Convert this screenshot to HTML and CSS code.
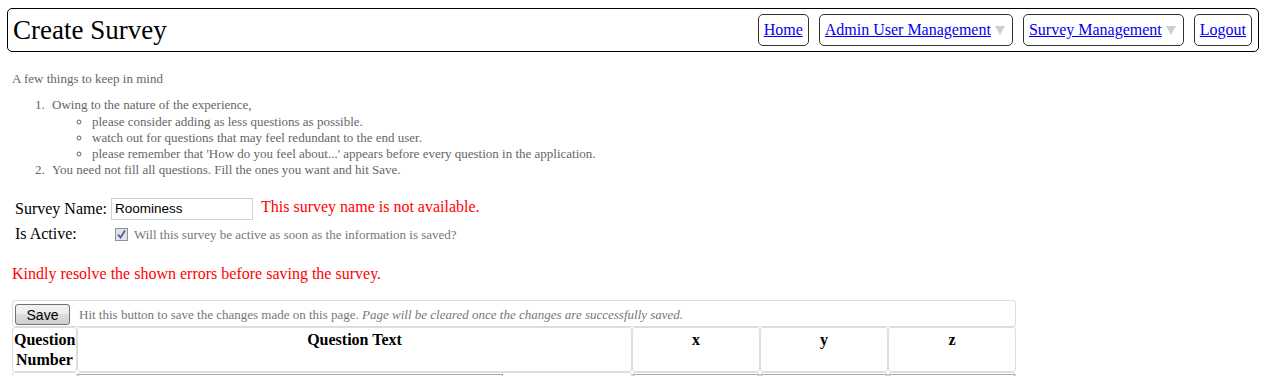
FILE: index.html
```html
<!DOCTYPE html>
<html lang="en">
<head>
    <meta charset="UTF-8">
    <title>Create Survey</title>
    <link rel="stylesheet" href="styles.css">
</head>
<body>
<div class="header">
    <h1 class="title">Create Survey</h1>
    <ul class="nav">
        <li><a href="#">Home</a></li>
        <li><a href="#">Admin User Management</a><span class="caret"></span></li>
        <li><a href="#">Survey Management</a><span class="caret"></span></li>
        <li><a href="#">Logout</a></li>
    </ul>
</div>

<div class="content">
    <div class="notes">
        <p>A few things to keep in mind</p>
        <ol>
            <li>Owing to the nature of the experience,
                <ul>
                    <li>please consider adding as less questions as possible.</li>
                    <li>watch out for questions that may feel redundant to the end user.</li>
                    <li>please remember that 'How do you feel about...' appears before every question in the application.</li>
                </ul>
            </li>
            <li>You need not fill all questions. Fill the ones you want and hit Save.</li>
        </ol>
    </div>

    <table class="fields">
        <tr class="name-row">
            <td class="label">Survey Name:</td>
            <td><input class="name-input" type="text" value="Roominess"> <span class="error">This survey name is not available.</span></td>
        </tr>
        <tr class="active-row">
            <td class="label">Is Active:</td>
            <td>
                <span class="check"><svg width="13" height="13" viewBox="0 0 13 13"><rect x="0.5" y="0.5" width="12" height="12" fill="#e2e3e6" stroke="#8f9094"/><path d="M3 6.5 L5.5 9.5 L10 2.5" fill="none" stroke="#4c5f8f" stroke-width="1.8"/></svg></span><span class="hint">Will this survey be active as soon as the information is saved?</span>
            </td>
        </tr>
    </table>

    <p class="summary">Kindly resolve the shown errors before saving the survey.</p>

    <table class="questions">
        <colgroup>
            <col class="col-num">
            <col class="col-text">
            <col class="col-dim">
            <col class="col-dim">
            <col class="col-dim">
        </colgroup>
        <tr>
            <td class="save-bar" colspan="5">
                <button class="save-btn" type="button">Save</button>
                <span class="save-hint">Hit this button to save the changes made on this page. <em>Page will be cleared once the changes are successfully saved.</em></span>
            </td>
        </tr>
        <tr>
            <th>Question Number</th>
            <th>Question Text</th>
            <th>x</th>
            <th>y</th>
            <th>z</th>
        </tr>
        <tr>
            <td class="num"></td>
            <td><input class="text-input" type="text"></td>
            <td><input class="dim-input" type="text"></td>
            <td><input class="dim-input" type="text"></td>
            <td><input class="dim-input" type="text"></td>
        </tr>
    </table>
</div>
</body>
</html>
```

FILE: styles.css
```css
body {
    margin: 0;
    font-family: "Liberation Serif", "Times New Roman", serif;
    line-height: 1.25;
    overflow: hidden;
}

/* header */
.header {
    margin: 8px 5px 0 7px;
    padding: 5px 6px 5px 5px;
    border: 1px solid #000;
    border-radius: 5px;
    display: flex;
    align-items: center;
    justify-content: space-between;
}
.title {
    margin: 0;
    font-size: 27px;
    font-weight: normal;
    line-height: 32px;
}
.nav {
    list-style: none;
    margin: 0;
    padding: 0;
    display: flex;
    gap: 10px;
}
.nav li {
    display: flex;
    align-items: center;
    padding: 5px;
    border: 1px solid #333;
    border-radius: 5px;
    font-size: 16px;
}
.nav a {
    color: #0000ee;
}
.caret {
    width: 0;
    height: 0;
    margin: 0 2px 0 4px;
    border-left: 5px solid transparent;
    border-right: 5px solid transparent;
    border-top: 9px solid #cfcfcf;
}

/* body */
.content {
    padding: 0 12px;
}
.notes {
    margin-top: 19px;
    font-size: 13px;
    color: #666;
}
.notes p {
    margin: 0 0 10px;
}
.notes ol,
.notes ul {
    margin: 0;
    padding-left: 40px;
}
.notes ol > li {
    padding-left: 4px;
}
.notes ol {
    padding-left: 36px;
}

.fields {
    margin-top: 18px;
    border-collapse: collapse;
    font-size: 16px;
}
.fields td {
    padding: 0;
    vertical-align: middle;
}
.fields .label {
    width: 96px;
    padding-left: 3px;
}
.name-row td {
    height: 24px;
}
.active-row td {
    height: 26px;
}
.name-input {
    box-sizing: border-box;
    width: 142px;
    height: 22px;
    margin: 0;
    padding: 0 3px;
    border: 1px solid #cdd0d6;
    font-family: "Liberation Sans", Arial, sans-serif;
    font-size: 13.5px;
    vertical-align: middle;
}
.error {
    margin-left: 4px;
    color: #ff0000;
}
.check {
    display: inline-block;
    width: 13px;
    height: 13px;
    margin: 0 6px 0 4px;
    vertical-align: middle;
}
.check svg {
    display: block;
}
.hint {
    font-size: 13px;
    color: #777;
    vertical-align: middle;
}

.summary {
    margin: 17px 0 16px;
    font-size: 16px;
    color: #ff0000;
}

/* questions table */
.questions {
    width: 1004px;
    table-layout: fixed;
    border-collapse: separate;
    border-spacing: 0;
}
.col-num {
    width: 65px;
}
.col-text {
    width: 555px;
}
.col-dim {
    width: 128px;
}
.questions th,
.questions td {
    box-sizing: border-box;
    border: 1px solid #ddd;
    border-radius: 3px;
    padding: 1px 0;
}
.questions th {
    padding: 2px 1px 1px;
    font-size: 16px;
    vertical-align: top;
}
.questions .save-bar {
    padding: 3px 2px 1px;
    text-align: left;
}
.save-btn {
    box-sizing: border-box;
    width: 55px;
    height: 21px;
    margin: 0 5px 0 0;
    padding: 0;
    border: 1px solid #707070;
    border-radius: 3px;
    background: linear-gradient(#f2f2f2, #ebebeb 50%, #dddddd 50%, #cfcfcf);
    font-family: "Liberation Sans", Arial, sans-serif;
    font-size: 14px;
    color: #000;
    vertical-align: middle;
}
.save-hint {
    font-size: 13px;
    color: #777;
    vertical-align: middle;
}
.num {
    height: 26px;
}
.text-input {
    display: block;
    box-sizing: border-box;
    width: 425px;
    height: 22px;
    margin: 0;
    border: 1px solid #aaa;
}
.dim-input {
    display: block;
    box-sizing: border-box;
    width: 100%;
    height: 22px;
    margin: 0;
    border: 1px solid #aaa;
}
```
